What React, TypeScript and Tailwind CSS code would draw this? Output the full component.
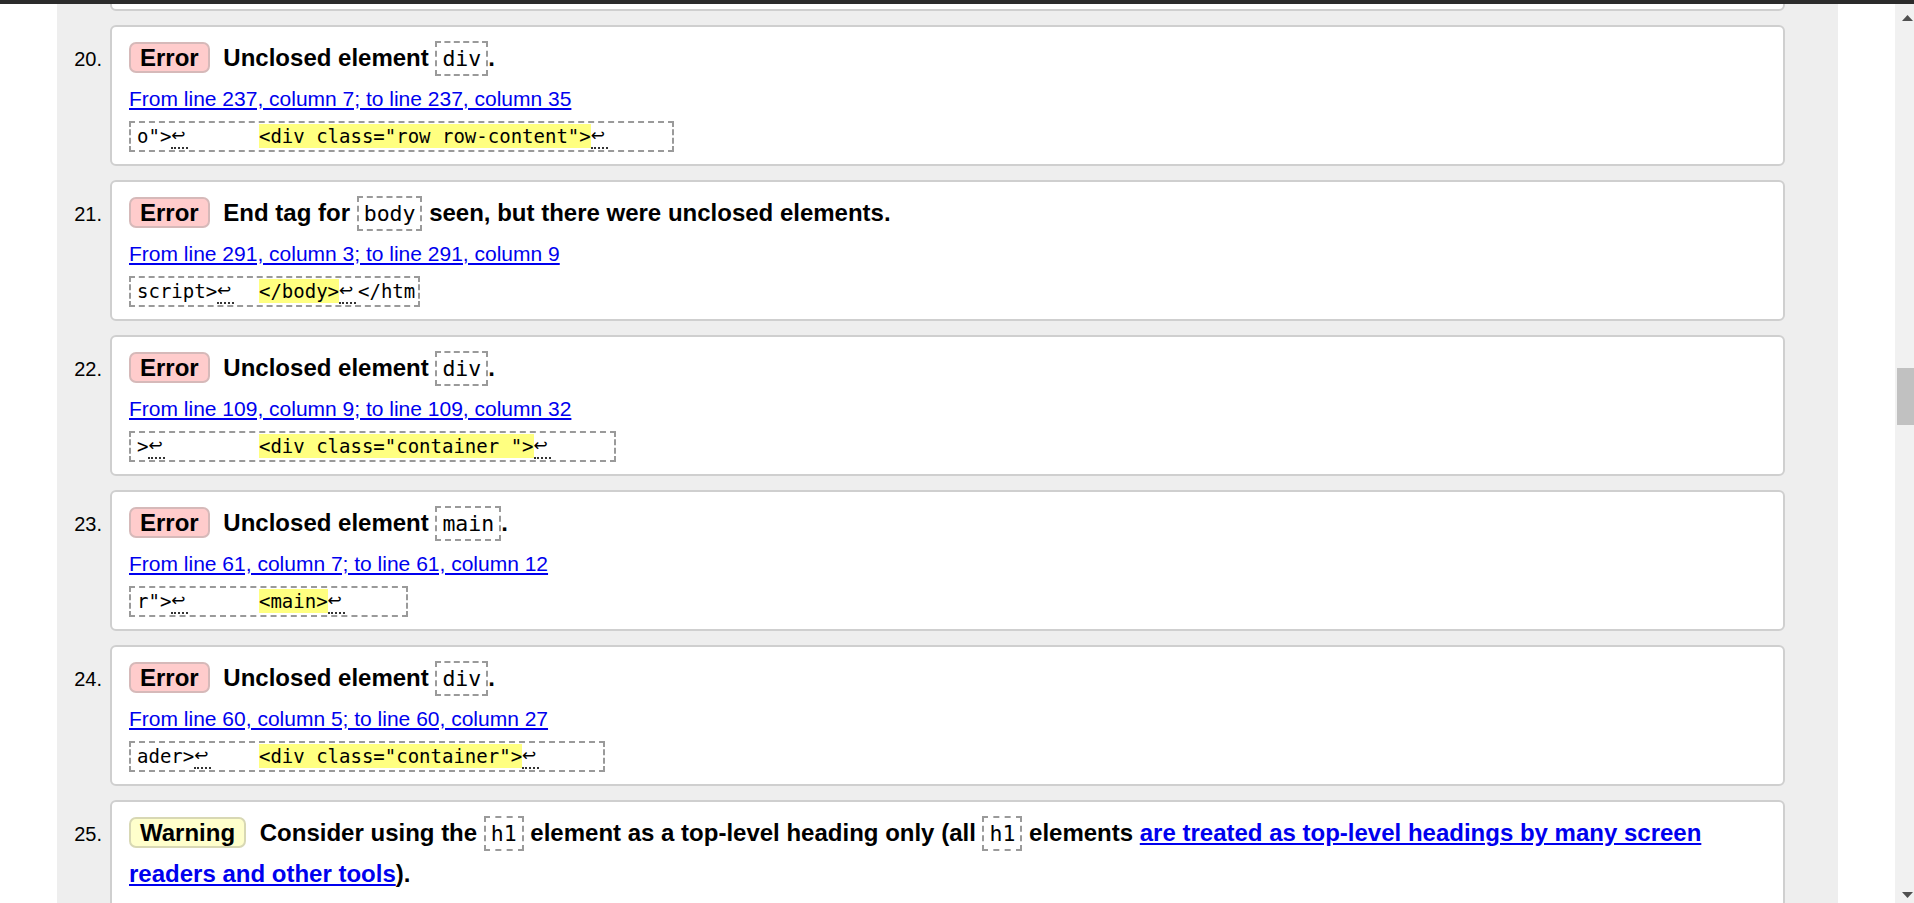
import type { ReactNode } from "react";

type Piece = { kind: "text" | "hl" | "nl"; value?: string };

type Message = {
    n: number;
    level: "Error" | "Warning";
    title: ReactNode;
    link?: string;
    extract?: Piece[];
    extractWidth?: string;
};

const Code = ({ children }: { children: ReactNode }) => (
    <code className="inline-block h-[35px] px-[5px] border-2 border-dashed border-[#9a9a9a] font-['DejaVu_Sans_Mono',monospace] font-normal text-[21.5px] leading-[31px]">
        {children}
    </code>
);

const t = (value: string): Piece => ({ kind: "text", value });
const hl = (value: string): Piece => ({ kind: "hl", value });
const nl: Piece = { kind: "nl" };

const messages: Message[] = [
    {
        n: 20,
        level: "Error",
        title: (
            <>
                Unclosed element <Code>div</Code>.
            </>
        ),
        link: "From line 237, column 7; to line 237, column 35",
        extract: [t('o">'), nl, t("      "), hl('<div class="row row-content">'), nl],
        extractWidth: "w-[545px]",
    },
    {
        n: 21,
        level: "Error",
        title: (
            <>
                End tag for <Code>body</Code> seen, but there were unclosed elements.
            </>
        ),
        link: "From line 291, column 3; to line 291, column 9",
        extract: [t("script>"), nl, t("  "), hl("</body>"), nl, t("</htm")],
        extractWidth: "w-[291px]",
    },
    {
        n: 22,
        level: "Error",
        title: (
            <>
                Unclosed element <Code>div</Code>.
            </>
        ),
        link: "From line 109, column 9; to line 109, column 32",
        extract: [t(">"), nl, t("        "), hl('<div class="container ">'), nl],
        extractWidth: "w-[487px]",
    },
    {
        n: 23,
        level: "Error",
        title: (
            <>
                Unclosed element <Code>main</Code>.
            </>
        ),
        link: "From line 61, column 7; to line 61, column 12",
        extract: [t('r">'), nl, t("      "), hl("<main>"), nl],
        extractWidth: "w-[279px]",
    },
    {
        n: 24,
        level: "Error",
        title: (
            <>
                Unclosed element <Code>div</Code>.
            </>
        ),
        link: "From line 60, column 5; to line 60, column 27",
        extract: [t("ader>"), nl, t("    "), hl('<div class="container">'), nl],
        extractWidth: "w-[476px]",
    },
    {
        n: 25,
        level: "Warning",
        title: (
            <>
                Consider using the <Code>h1</Code> element as a top-level heading only (all{" "}
                <Code>h1</Code> elements{" "}
                <a href="#" className="text-[#0000ee] underline">
                    are treated as top-level headings by many screen readers and other tools
                </a>
                ).
            </>
        ),
    },
];

const Extract = ({ pieces, width }: { pieces: Piece[]; width?: string }) => (
    <div
        className={`mt-[7px] flex items-start h-[31px] border-2 border-dashed border-[#9a9a9a] pl-[6px] whitespace-pre font-['DejaVu_Sans_Mono',monospace] text-[19px] text-black ${width}`}
    >
        {pieces.map((p, i) => {
            if (p.kind === "nl") {
                return (
                    <span
                        key={i}
                        className="inline-block w-[19px] h-[27px] shrink-0 font-['DejaVu_Sans',sans-serif] text-[17px] leading-[25px]"
                    >
                        <span className="inline-block w-[17px] border-b-2 border-dotted border-[#333] leading-[24px]">
                            ↩
                        </span>
                    </span>
                );
            }
            if (p.kind === "hl") {
                return (
                    <span key={i} className="mt-[1px] h-[24px] leading-[24px] bg-[#ffff80]">
                        {p.value}
                    </span>
                );
            }
            return (
                <span key={i} className="leading-[27px]">
                    {p.value}
                </span>
            );
        })}
    </div>
);

const Card = ({ m }: { m: Message }) => {
    const badge =
        m.level === "Error"
            ? "bg-[#ffcccc] border-[#d6b9b9]"
            : "bg-[#ffffcc] border-[#d8d8b4]";
    return (
        <div className="flex-1 bg-white border-2 border-[#cfcfcf] rounded-[6px] pt-[10px] pb-[12px] pl-[17px] pr-[40px]">
            <p className="text-[24px] leading-[41px] font-bold text-black">
                <strong
                    className={`inline-block h-[31px] px-[9px] mr-[7px] border-2 rounded-[7px] leading-[27px] ${badge}`}
                >
                    {m.level}
                </strong>{" "}
                {m.title}
            </p>
            {m.link && (
                <p className="mt-[6px] text-[21px] leading-[30px]">
                    <a href="#" className="text-[#0000ee] underline">
                        {m.link}
                    </a>
                </p>
            )}
            {m.extract && <Extract pieces={m.extract} width={m.extractWidth} />}
        </div>
    );
};

export default function App() {
    return (
        <div className="w-[1914px] h-[903px] overflow-hidden flex flex-col bg-white font-['Liberation_Sans',Arial,sans-serif]">
            <div className="h-[4px] bg-[#2b2b2b] shrink-0"></div>
            <div className="flex flex-1 min-h-0">
                <div className="flex-1 px-[57px]">
                    <div className="bg-[#eeeeee] h-full pr-[53px] overflow-hidden">
                        <ol className="-mt-[134px] flex flex-col gap-[14px]">
                            <li className="flex">
                                <div className="w-[53px] shrink-0"></div>
                                <div className="flex-1 h-[141px] bg-white border-2 border-[#cfcfcf] rounded-[6px]"></div>
                            </li>
                            {messages.map((m) => (
                                <li key={m.n} className="flex items-baseline">
                                    <span className="w-[53px] shrink-0 pr-[8px] text-right text-[20px] text-black">
                                        {m.n}.
                                    </span>
                                    <Card m={m} />
                                </li>
                            ))}
                        </ol>
                    </div>
                </div>
                <div className="w-[19px] shrink-0 bg-[#f1f1f1] relative">
                    <svg className="absolute left-[7px] top-[11px]" width="11" height="6" viewBox="0 0 11 6">
                        <polygon points="5.5,0 11,6 0,6" fill="#505050" />
                    </svg>
                    <div className="absolute left-[2px] right-0 top-[364px] h-[57px] bg-[#c1c1c1]"></div>
                    <svg className="absolute left-[7px] bottom-[5px]" width="11" height="6" viewBox="0 0 11 6">
                        <polygon points="0,0 11,0 5.5,6" fill="#505050" />
                    </svg>
                </div>
            </div>
        </div>
    );
}
